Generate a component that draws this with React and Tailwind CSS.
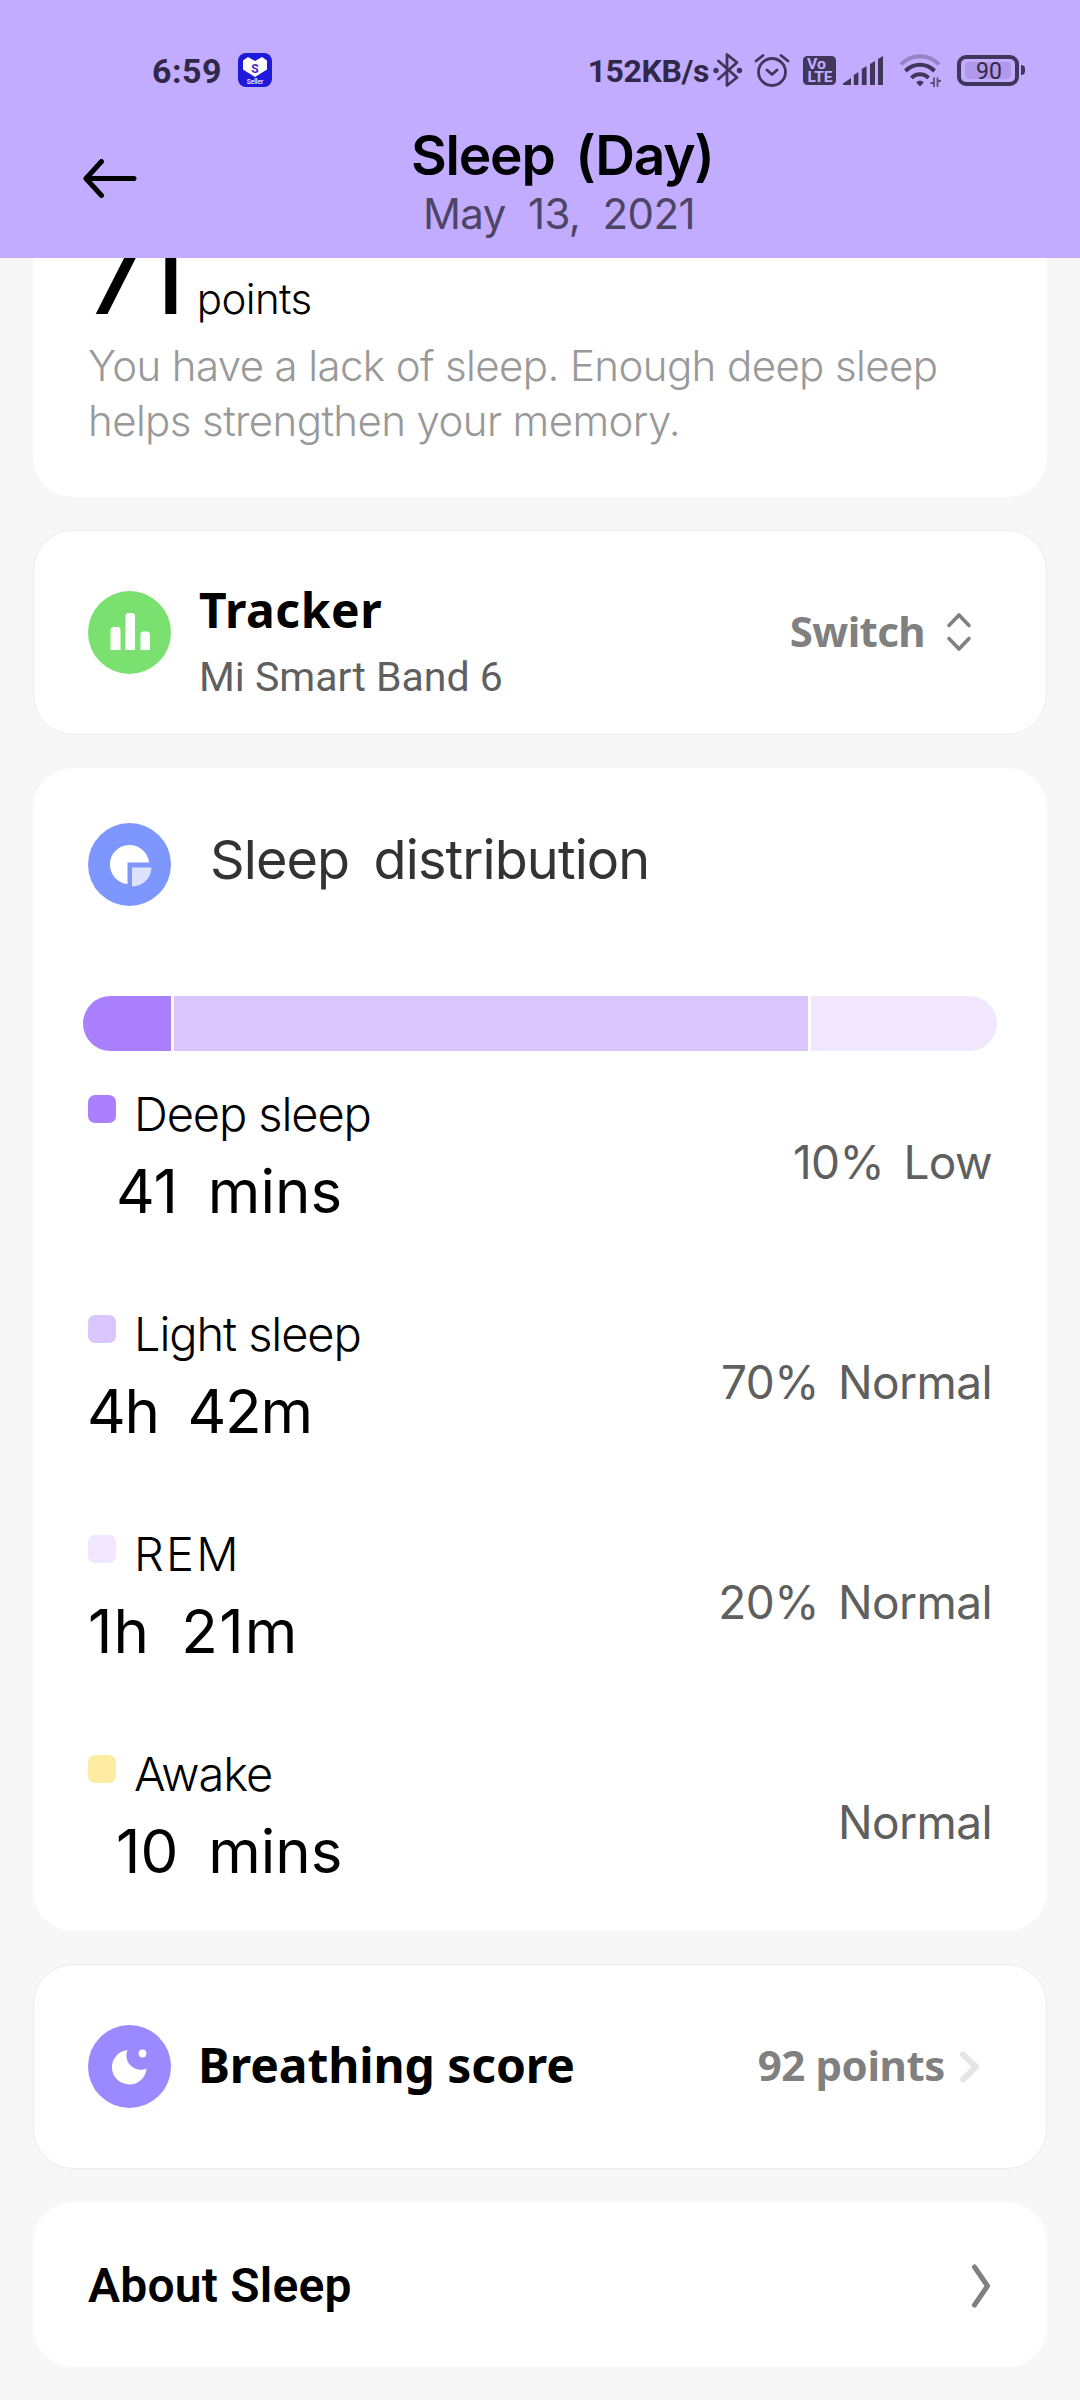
import React from 'react';
import clsx from 'clsx';

const stages = [
  { label: 'Deep sleep', value: '41 mins', indent: true, note: '10% Low', color: 'bg-[#ab80ff]' },
  { label: 'Light sleep', value: '4h 42m', tight: true, note: '70% Normal', color: 'bg-[#d9c6fd]' },
  { label: 'REM', wide: true, value: '1h 21m', note: '20% Normal', color: 'bg-[#f1e7fe]' },
  { label: 'Awake', value: '10 mins', indent: true, note: 'Normal', color: 'bg-[#ffeca3]' },
];

const SellerIcon = () => (
  <svg className="w-[34px] h-[34px]" viewBox="0 0 34 34">
    <rect width="34" height="34" rx="8" fill="#1f19dc" />
    <path d="M5 7.500 10 4l7 4 7-4 5 3.500V16.500L17 24 5 16.500Z" fill="#fff" />
    <text x="17" y="19.500" textAnchor="middle" fontFamily="Roboto, sans-serif" fontWeight="700" fontSize="12" fill="#4a1fd0">S</text>
    <text x="17" y="31" textAnchor="middle" fontFamily="Roboto, sans-serif" fontWeight="500" fontSize="6.500" fill="#fff">Seller</text>
  </svg>
);

const BluetoothIcon = () => (
  <svg className="w-[30px] h-[34px]" viewBox="0 0 30 34" fill="none" stroke="#40355a" strokeWidth="2.800" strokeLinejoin="round" strokeLinecap="round">
    <path d="M5.500 8 24 24.500 14 32.500V1.500L24 9.500 5.500 26" />
    <circle cx="3" cy="17.500" r="1.300" fill="#40355a" />
    <circle cx="26.500" cy="17.500" r="1.300" fill="#40355a" />
  </svg>
);

const AlarmIcon = () => (
  <svg className="w-[36px] h-[34px]" viewBox="0 0 36 34" fill="none" stroke="#40355a" strokeWidth="2.800" strokeLinecap="round">
    <circle cx="18" cy="19" r="13.500" />
    <path d="m13 17 5 4.500 5-4.500M2 8l7-5.500M34 8l-7-5.500" strokeLinejoin="round" />
  </svg>
);

const VolteIcon = () => (
  <svg className="w-[33px] h-[29px]" viewBox="0 0 33 29">
    <rect width="33" height="29" rx="4.500" fill="#40355a" />
    <g fontFamily="Roboto, sans-serif" fontWeight="700" fill="#c2acff">
      <text x="4" y="13.200" fontSize="14" textLength="19" lengthAdjust="spacingAndGlyphs">Vo</text>
      <text x="4.500" y="26.200" fontSize="14" textLength="25" lengthAdjust="spacingAndGlyphs">LTE</text>
    </g>
  </svg>
);

const SignalIcon = () => (
  <svg className="w-[40px] h-[29px]" viewBox="0 0 40 29" fill="#40355a">
    <path d="M0 29v-1.500L8 22v7ZM10.800 19l4.600-3v13h-4.600ZM18.800 13l4.800-3v19h-4.800ZM27 8l5-3v24h-5ZM35 3 40 0v29h-5Z" />
  </svg>
);

const WifiIcon = () => (
  <svg className="w-[43px] h-[34px]" viewBox="0 0 43 34" fill="none" stroke="#40355a" strokeWidth="4">
    <path d="M2 11.500a26 26 0 0 1 38 0" strokeOpacity="0.350" />
    <path d="M6.500 18a20 20 0 0 1 29 0M12.500 25a11.500 11.500 0 0 1 17 0" />
    <path d="M21 33.500 17.200 29.500q3.800-4 7.600 0Z" fill="#40355a" stroke="none" />
    <path d="M31.500 30h3.500M35 24.500v9.500M42 28h-3.500M38.500 24.500v9.500" strokeWidth="1.800" strokeOpacity="0.800" />
  </svg>
);

const StatusBar = () => (
  <div className="flex h-[34px] items-center font-['Roboto',sans-serif]">
    <span className="pt-px text-[34px] font-bold leading-none tracking-[0.5px] text-[#312849]">6:59</span>
    <div className="ml-[16px]"><SellerIcon /></div>
    <span className="mr-[4px] ml-auto pt-px text-[32px] font-bold leading-none tracking-[-0.4px] text-[#312849]">152KB/s</span>
    <BluetoothIcon />
    <div className="ml-[11px]"><AlarmIcon /></div>
    <div className="ml-[13px]"><VolteIcon /></div>
    <div className="ml-[7px]"><SignalIcon /></div>
    <div className="ml-[16px]"><WifiIcon /></div>
    <div className="ml-[15px] flex h-[31px] w-[62px] items-center justify-center rounded-[9px] border-4 border-[#40355a]">
      <div className="flex h-[17px] w-[46px] items-center justify-center rounded-sm bg-[#b199ea] pt-[2px] pl-[2px] text-[23px] leading-none text-[#312849]">90</div>
    </div>
    <div className="ml-[2px] h-[10px] w-[4px] rounded-r bg-[#40355a]" />
  </div>
);

const Header = () => (
  <header className="h-[258px] shrink-0 bg-[#c2acff] pt-[53px] pr-[55px] pl-[152px]">
    <StatusBar />
    <div className="-ml-[70px] flex pt-[38px]">
      <svg className="mt-[34px] h-[39px] w-[55px]" viewBox="0 0 55 39" fill="none" stroke="#000" strokeWidth="5" strokeLinecap="round" strokeLinejoin="round">
        <path d="M19.500 2.500 4 19.500l15.500 17M4 19.500h48" />
      </svg>
      <div className="ml-[274px]">
        <h1 className="text-[55px] font-[560] leading-[60px] tracking-[-1.2px] whitespace-nowrap text-black [word-spacing:8px]">Sleep (Day)</h1>
        <p className="ml-[12px] text-[42px] leading-[58px] tracking-[-0.6px] whitespace-nowrap text-[#4d4466] [word-spacing:11px]">May 13, 2021</p>
      </div>
    </div>
  </header>
);

const Card = ({ bordered, className, children }) => (
  <section className={clsx('rounded-[40px] bg-white', bordered && 'border border-[#ececec]', className)}>
    {children}
  </section>
);

const BarsIcon = () => (
  <svg className="h-[83px] w-[83px]" viewBox="0 0 83 83">
    <circle cx="41.500" cy="41.500" r="41.500" fill="#7ae171" />
    <path d="M22.500 59V39a3 3 0 0 1 3-3h4a3 3 0 0 1 3 3v20ZM37.500 59V25a3 3 0 0 1 3-3h3.500a3 3 0 0 1 3 3v34ZM52.500 59V43.500a3 3 0 0 1 3-3h3.500a3 3 0 0 1 3 3V59Z" fill="#fff" />
  </svg>
);

const PieIcon = () => (
  <svg className="h-[83px] w-[83px]" viewBox="0 0 83 83">
    <circle cx="41.500" cy="41.500" r="41.500" fill="#7e97fe" />
    <path d="M39.500 61A19.600 19.600 0 1 1 61 39.500H39.500Z" fill="#fff" />
    <path d="M44 44.500h19.500A19.500 19.500 0 0 1 44 63.500Z" fill="#dde3ff" />
  </svg>
);

const MoonIcon = () => (
  <svg className="h-[83px] w-[83px]" viewBox="0 0 83 83">
    <circle cx="41.500" cy="41.500" r="41.500" fill="#9b8aff" />
    <path d="M39.500 25A17.300 17.300 0 1 0 58.500 43.500C48 48.500 34.500 38 39.500 25Z" fill="#fff" />
    <circle cx="54.500" cy="28.500" r="3.900" fill="#fff" />
  </svg>
);

const StageRow = ({ stage }) => (
  <div className="flex h-[220px] justify-between">
    <div>
      <div className="flex">
        <span className={clsx('mt-[9px] h-[28px] w-[28px] rounded-[7px]', stage.color)} />
        <span
          className={clsx(
            'ml-[18px] text-[47px] font-light leading-[56px] text-black',
            stage.wide ? 'tracking-[2.2px]' : 'tracking-[-1.1px]'
          )}
        >
          {stage.label}
        </span>
      </div>
      <p
        className={clsx(
          'mt-[13px] text-[60px] leading-[72px] text-black [word-spacing:13px]',
          stage.indent && 'ml-[28px]',
          stage.tight && '-ml-px tracking-[-1.2px]',
          stage.wide && 'tracking-[1.2px]'
        )}
      >
        {stage.value}
      </p>
    </div>
    <p className="mt-[48px] text-[46px] leading-[56px] tracking-[-0.6px] text-[#5f5f5f] [word-spacing:7px]">{stage.note}</p>
  </div>
);

export default function App() {
  return (
    <div className="flex h-[2400px] w-[1080px] flex-col overflow-hidden bg-[#f7f7f7] font-['Inter',sans-serif]">
      <Header />
      <main className="flex flex-col px-[33px]">
        {/* Score, scrolled partly under the header */}
        <section className="h-[239px] overflow-hidden rounded-b-[40px] bg-white px-[55px]">
          <div className="-mt-[53px] flex h-[132px] items-baseline text-black">
            <span className="-ml-[4px] text-[120px] leading-[132px] tracking-[-14px]">71</span>
            <span className="ml-[24px] text-[42px] font-light tracking-[-0.6px]">points</span>
          </div>
          <p className="mt-px text-[42px] font-light leading-[55px] tracking-[-0.6px] text-[#999]">
            You have a lack of sleep. Enough deep sleep<br />helps strengthen your memory.
          </p>
        </section>

        <Card bordered className="mt-[33px] flex h-[205px] pl-[54px]">
          <div className="mt-[60px]"><BarsIcon /></div>
          <div className="mt-[46px] ml-[28px]">
            <h2 className="font-['Noto_Sans',sans-serif] text-[48px] font-bold leading-[66px] tracking-[0.6px] text-black">Tracker</h2>
            <p className="font-['Roboto',sans-serif] text-[41px] leading-[68px] text-[#5f5f5f]">Mi Smart Band 6</p>
          </div>
          <div className="mr-[73px] ml-auto flex h-[202px] items-center">
            <span className="-mt-[3px] font-['Noto_Sans',sans-serif] text-[42px] font-bold tracking-[-0.6px] text-[#808080]">Switch</span>
            <svg className="ml-[20px] h-[40px] w-[28px]" viewBox="0 0 28 40" fill="none" stroke="#808080" strokeWidth="3.600" strokeLinecap="round" strokeLinejoin="round">
              <path d="M4 13.500 14 3 24 13.500M4 26.500 14 37 24 26.500" />
            </svg>
          </div>
        </Card>

        <Card className="mt-[33px] h-[1163px] px-[50px]">
          <div className="flex pt-[55px] pl-[5px]">
            <PieIcon />
            <h2 className="ml-[39px] text-[54px] leading-[73px] tracking-[-0.9px] text-[#333] [word-spacing:10px]">Sleep distribution</h2>
          </div>
          <div className="mt-[90px] flex h-[55px] gap-[3px] overflow-hidden rounded-full">
            <div className="w-[88px] bg-[#ab80ff]" />
            <div className="w-[634px] bg-[#d9c6fd]" />
            <div className="flex-1 bg-[#f1e7fe]" />
          </div>
          <div className="mt-[35px] px-[5px]">
            {stages.map((stage) => (
              <StageRow key={stage.label} stage={stage} />
            ))}
          </div>
        </Card>

        <Card bordered className="mt-[33px] flex h-[205px] items-center pr-[64px] pl-[54px]">
          <MoonIcon />
          <h2 className="-mt-[3px] ml-[27px] font-['Noto_Sans',sans-serif] text-[48px] font-bold tracking-[-0.1px] text-black">Breathing score</h2>
          <span className="-mt-[4px] ml-auto font-['Noto_Sans',sans-serif] text-[42px] font-bold tracking-[-0.4px] text-[#808080]">92 points</span>
          <svg className="ml-[13px] h-[34px] w-[24px]" viewBox="0 0 24 34" fill="none" stroke="#e5e5e5" strokeWidth="6" strokeLinecap="round" strokeLinejoin="round">
            <path d="m5 4.500 13 12.500L5 29.500" />
          </svg>
        </Card>

        <Card className="mt-[33px] flex h-[165px] items-center justify-between pt-[3px] pr-[55px] pl-[55px]">
          <h2 className="font-['Roboto',sans-serif] text-[48px] font-semibold tracking-[0.2px] text-black">About Sleep</h2>
          <svg className="h-[46px] w-[22px]" viewBox="0 0 22 46" fill="none" stroke="#808080" strokeWidth="5" strokeLinecap="round" strokeLinejoin="round">
            <path d="m4.500 4 13 19-13 19" />
          </svg>
        </Card>
      </main>
    </div>
  );
}
